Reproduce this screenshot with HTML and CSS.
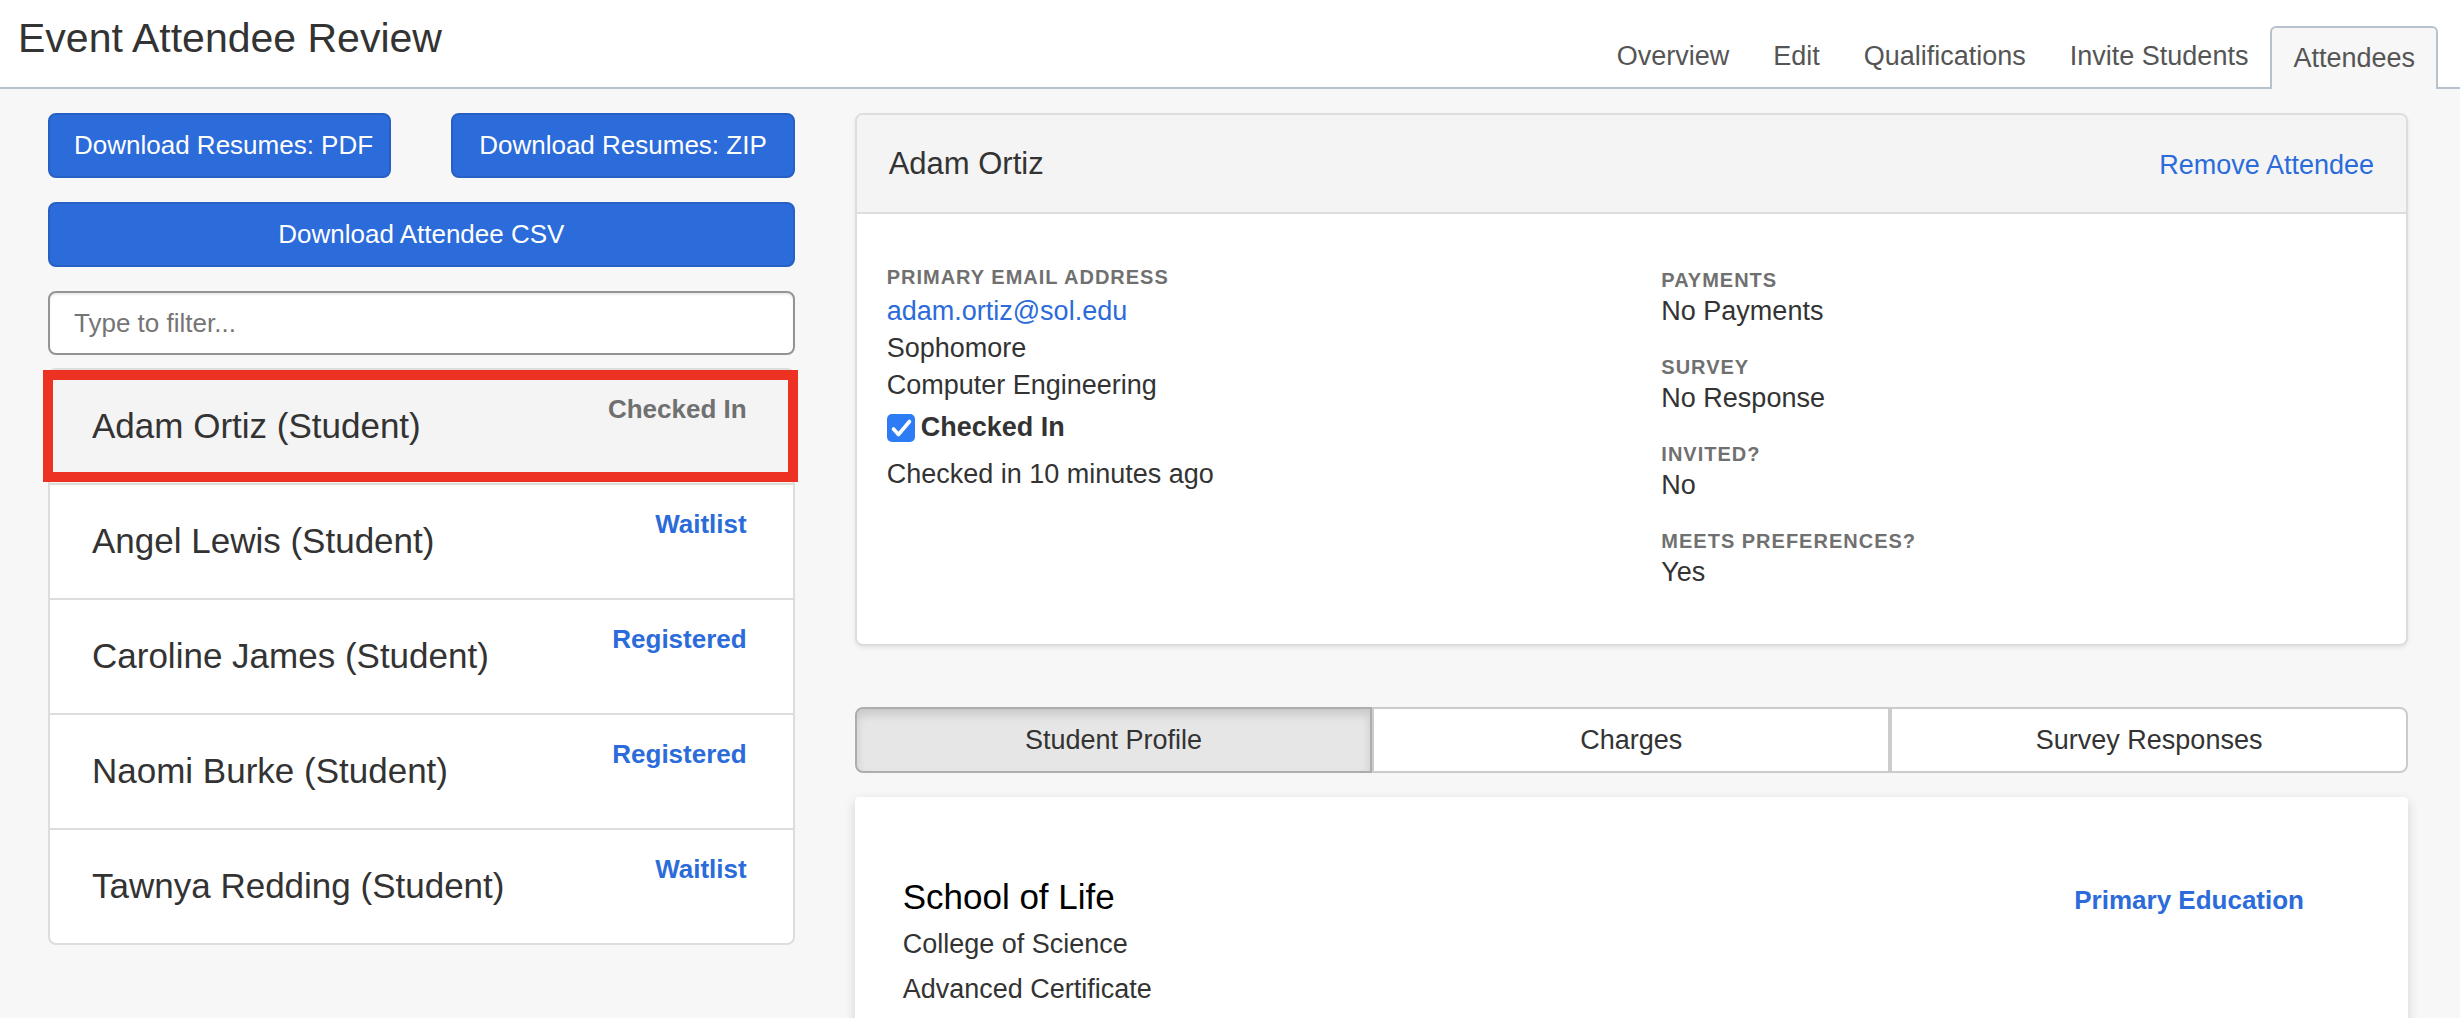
FILE: index.html
```
<!DOCTYPE html>
<html lang="en">
<head>
    <meta charset="UTF-8">
    <meta name="viewport" content="width=device-width, initial-scale=1.0">
    <title>Event Attendee Review</title>
    <link rel="stylesheet" href="styles.css">
</head>
<body>

    <header class="page-header">
        <h1>Event Attendee Review</h1>
        <nav class="page-nav">
            <a href="#overview">Overview</a>
            <a href="#edit">Edit</a>
            <a href="#qualifications">Qualifications</a>
            <a href="#invite">Invite Students</a>
            <a href="#attendees" class="active">Attendees</a>
        </nav>
    </header>

    <main class="content">

        <!-- Attendee list -->
        <section class="sidebar">
            <div class="download-row">
                <button type="button" class="btn">Download Resumes: PDF</button>
                <button type="button" class="btn">Download Resumes: ZIP</button>
            </div>
            <button type="button" class="btn btn-block">Download Attendee CSV</button>
            <input type="text" class="filter" placeholder="Type to filter..." aria-label="Filter attendees">

            <ul class="attendee-list">
                <li class="attendee selected">
                    <span class="attendee-name">Adam Ortiz (Student)</span>
                    <span class="status checked-in">Checked In</span>
                </li>
                <li class="attendee">
                    <span class="attendee-name">Angel Lewis (Student)</span>
                    <span class="status">Waitlist</span>
                </li>
                <li class="attendee">
                    <span class="attendee-name">Caroline James (Student)</span>
                    <span class="status">Registered</span>
                </li>
                <li class="attendee">
                    <span class="attendee-name">Naomi Burke (Student)</span>
                    <span class="status">Registered</span>
                </li>
                <li class="attendee">
                    <span class="attendee-name">Tawnya Redding (Student)</span>
                    <span class="status">Waitlist</span>
                </li>
            </ul>
        </section>

        <!-- Selected attendee -->
        <section class="details">
            <div class="card">
                <div class="card-header">
                    <h2>Adam Ortiz</h2>
                    <a href="#remove">Remove Attendee</a>
                </div>
                <div class="card-body">
                    <div class="contact">
                        <h3 class="label">Primary Email Address</h3>
                        <p><a href="mailto:adam.ortiz@sol.edu">adam.ortiz@sol.edu</a></p>
                        <p>Sophomore</p>
                        <p>Computer Engineering</p>
                        <div class="check-row">
                            <input type="checkbox" id="checkedIn" checked>
                            <label for="checkedIn">Checked In</label>
                        </div>
                        <p>Checked in 10 minutes ago</p>
                    </div>
                    <dl class="facts">
                        <div>
                            <dt class="label">Payments</dt>
                            <dd>No Payments</dd>
                        </div>
                        <div>
                            <dt class="label">Survey</dt>
                            <dd>No Response</dd>
                        </div>
                        <div>
                            <dt class="label">Invited?</dt>
                            <dd>No</dd>
                        </div>
                        <div>
                            <dt class="label">Meets Preferences?</dt>
                            <dd>Yes</dd>
                        </div>
                    </dl>
                </div>
            </div>

            <div class="btn-group">
                <button type="button" class="active">Student Profile</button>
                <button type="button">Charges</button>
                <button type="button">Survey Responses</button>
            </div>

            <div class="panel">
                <div>
                    <h2>School of Life</h2>
                    <p>College of Science</p>
                    <p>Advanced Certificate</p>
                </div>
                <strong class="education-type">Primary Education</strong>
            </div>
        </section>

    </main>

</body>
</html>
```
FILE: styles.css
```
* {
    box-sizing: border-box;
}

html,
body {
    height: 100%;
}

body {
    margin: 0;
    overflow: hidden;
    background-color: #f7f7f7;
    color: #333;
    font-family: "Liberation Sans", Arial, sans-serif;
    font-size: 27px;
}

h1, h2, h3, p, ul, dl, dd {
    margin: 0;
    padding: 0;
    font-weight: normal;
}

a {
    color: #2b6bda;
    text-decoration: none;
}

button,
input {
    font-family: inherit;
}

/* Header */
.page-header {
    display: flex;
    justify-content: space-between;
    align-items: flex-end;
    padding: 10px 22px 0 18px;
    background-color: #fff;
    border-bottom: 2px solid #b8c2cc;
}

.page-header h1 {
    align-self: flex-start;
    font-size: 41px;
    line-height: 56px;
}

.page-nav {
    display: flex;
    padding-top: 14px;
}

.page-nav a {
    padding: 2px 22px 0;
    color: #555;
    line-height: 61px;
    white-space: nowrap;
}

.page-nav a.active {
    margin: 2px 0 -2px;
    padding: 1px 21px;
    line-height: 59px;
    background-color: #f7f7f7;
    border: 2px solid #b8c2cc;
    border-bottom: 0;
    border-radius: 6px 6px 0 0;
}

.content {
    display: grid;
    grid-template-columns: repeat(3, minmax(0, 1fr));
    gap: 60px;
    padding: 24px 52px 24px 48px;
}

/* Left column */
.download-row {
    display: grid;
    grid-template-columns: repeat(2, minmax(0, 1fr));
    gap: 60px;
    margin-bottom: 24px;
}

.btn {
    padding: 0 24px;
    background-color: #2b6bda;
    border: 2px solid #2760c4;
    border-radius: 8px;
    color: #fff;
    font-size: 26px;
    line-height: 61px;
    white-space: nowrap;
    cursor: pointer;
}

.btn-block {
    display: block;
    width: 100%;
    margin-bottom: 24px;
}

.filter {
    display: block;
    width: 100%;
    height: 64px;
    margin-bottom: 13px;
    padding: 0 24px;
    background-color: #fff;
    border: 2px solid #949494;
    border-radius: 8px;
    box-shadow: inset 0 2px 2px rgba(0, 0, 0, 0.075);
    color: #333;
    font-size: 26px;
}

.filter::placeholder {
    color: #757575;
}

.attendee-list {
    list-style: none;
    background-color: #fff;
    border: 2px solid #ddd;
    border-radius: 8px;
}

.attendee {
    display: flex;
    justify-content: space-between;
    align-items: flex-start;
    padding: 22px 46px 32px 42px;
}

.attendee + .attendee {
    border-top: 2px solid #ddd;
}

.attendee-name {
    margin-top: 9px;
    font-size: 35px;
    line-height: 50px;
}

.status {
    color: #2b6bda;
    font-size: 26px;
    font-weight: bold;
    line-height: 34px;
}

.status.checked-in {
    color: #707070;
}

.attendee.selected {
    position: relative;
    background-color: #f4f4f4;
}

/* red frame lies over the list borders */
.attendee.selected::after {
    content: "";
    position: absolute;
    top: 0;
    right: -5px;
    bottom: 1px;
    left: -7px;
    border: 10px solid #ed3224;
}

/* Right column */
.details {
    grid-column: span 2;
}

.card {
    background-color: #fff;
    border: 2px solid #ddd;
    border-radius: 8px;
    box-shadow: 0 2px 4px rgba(0, 0, 0, 0.08);
}

.card-header {
    display: flex;
    justify-content: space-between;
    align-items: baseline;
    padding: 28px 32px 26px;
    background-color: #f4f4f4;
    border-bottom: 2px solid #ddd;
    border-radius: 6px 6px 0 0;
    line-height: 41px;
}

.card-header h2 {
    font-size: 31px;
}

.card-body {
    display: grid;
    grid-template-columns: repeat(2, 1fr);
    padding: 49px 0 54px;
}

.label {
    color: #707070;
    font-size: 20px;
    font-weight: bold;
    letter-spacing: 1px;
    line-height: 28px;
    text-transform: uppercase;
}

.contact {
    padding-left: 30px;
    line-height: 37px;
}

.contact .label {
    margin-bottom: 2px;
}

.check-row {
    display: flex;
    align-items: center;
    gap: 6px;
    margin: 5px 0 10px;
    font-weight: bold;
}

.check-row input {
    appearance: none;
    width: 28px;
    height: 28px;
    margin: 0;
    border-radius: 5px;
    border: 2px solid #949494;
}

.check-row input:checked {
    border: 0;
    background: #2d7cf6 url("data:image/svg+xml,%3Csvg xmlns='http://www.w3.org/2000/svg' viewBox='0 0 28 28'%3E%3Cpath d='M6.5 15l5 5.5L22.500 7.500' fill='none' stroke='%23fff' stroke-width='3.6' stroke-linecap='round' stroke-linejoin='round'/%3E%3C/svg%3E") center / 28px 28px no-repeat;
}

.facts {
    display: flex;
    flex-direction: column;
    gap: 24px;
    padding: 3px 0 0 30px;
    line-height: 35px;
}

.btn-group {
    display: grid;
    grid-template-columns: repeat(3, 1fr);
    margin: 61px 0 24px;
}

.btn-group button {
    padding: 0 24px;
    background-color: #fff;
    border: 2px solid #ccc;
    color: #333;
    font-size: 27px;
    line-height: 62px;
    cursor: pointer;
}

.btn-group button:first-child {
    border-radius: 8px 0 0 8px;
}

.btn-group button:last-child {
    border-radius: 0 8px 8px 0;
}

.btn-group button.active {
    background-color: #e6e6e6;
    border-color: #adadad;
    box-shadow: inset 0 6px 10px rgba(0, 0, 0, 0.125);
}

.panel {
    display: flex;
    justify-content: space-between;
    align-items: flex-start;
    padding: 75px 104px 75px 48px;
    background-color: #fff;
    border-radius: 4px;
    box-shadow: 0 4px 12px rgba(0, 0, 0, 0.15);
    line-height: 45px;
}

.panel h2 {
    color: #000;
    font-size: 35px;
    line-height: 50px;
}

.education-type {
    color: #2b6bda;
    font-size: 26px;
    line-height: 56px;
}
```
